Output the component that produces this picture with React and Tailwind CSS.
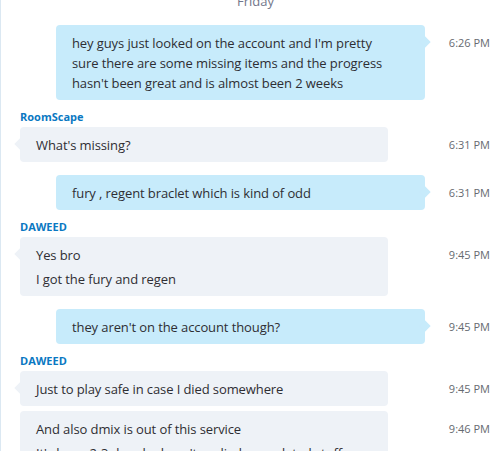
const font = { fontFamily: '"Open Sans", "Noto Sans", sans-serif' };

function Time({ children }) {
    return (
        <div className="flex-1 pt-[8px] pr-[1px] text-right text-[11px] leading-[20px] text-[#666a70]">
            {children}
        </div>
    );
}

function Sent({ lines, time }) {
    return (
        <div className="flex pl-[55px]">
            <div className="relative w-[369px] rounded-[4px] bg-[#c7ebfb] pt-[8px] pb-[7px] pl-[16px] pr-[12px]">
                {lines.map((l) => (
                    <div key={l} className="text-[13px] leading-[20px] tracking-[-0.1px] text-[#2e2e33]">{l}</div>
                ))}
                <span className="absolute right-[-4px] top-[13px] h-[8px] w-[8px] rotate-45 bg-[#c7ebfb]" />
            </div>
            <Time>{time}</Time>
        </div>
    );
}

function Received({ lines, time, arrow = false, gap = false }) {
    return (
        <div className="flex pl-[19px]">
            <div className={`relative flex w-[368px] flex-col rounded-[4px] bg-[#eef2f7] pt-[8px] pb-[7px] pl-[16px] pr-[12px] ${gap ? 'gap-[4px]' : ''}`}>
                {lines.map((l) => (
                    <div key={l} className="whitespace-nowrap text-[13px] leading-[20px] tracking-[-0.1px] text-[#2e2e33]">{l}</div>
                ))}
                {arrow && (
                    <span className="absolute left-[-4px] top-[13px] h-[8px] w-[8px] rotate-45 bg-[#eef2f7]" />
                )}
            </div>
            <Time>{time}</Time>
        </div>
    );
}

function Name({ children }) {
    return (
        <div className="mt-[10px] mb-[3px] pl-[19px] text-[11px] font-bold leading-[14px] text-[#0a78c2]">
            {children}
        </div>
    );
}

export default function App() {
    return (
        <div className="h-[451px] w-[491px] overflow-hidden border-l border-[#dbe8f2] bg-white" style={font}>
            {/* date divider */}
            <div className="-mt-[9px] flex items-center">
                <div className="mt-[-7px] h-px w-[218px] bg-[#dde5ec]" />
                <div className="w-[73px] text-center text-[13px] leading-[20px] text-[#72768a]">Friday</div>
                <div className="mt-[-7px] h-px flex-1 bg-[#dde5ec]" />
            </div>

            <div className="mt-[14px]">
                <Sent
                    lines={[
                        "hey guys just looked on the account and I'm pretty",
                        'sure there are some missing items and the progress',
                        "hasn't been great and is almost been 2 weeks",
                    ]}
                    time="6:26 PM"
                />
            </div>

            <Name>RoomScape</Name>
            <Received lines={["What's missing?"]} time="6:31 PM" arrow />

            <div className="mt-[13px]">
                <Sent lines={['fury , regent braclet which is kind of odd']} time="6:31 PM" />
            </div>

            <Name>DAWEED</Name>
            <Received lines={['Yes bro', 'I got the fury and regen']} time="9:45 PM" arrow gap />

            <div className="mt-[13px]">
                <Sent lines={["they aren't on the account though?"]} time="9:45 PM" />
            </div>

            <Name>DAWEED</Name>
            <Received lines={['Just to play safe in case I died somewhere']} time="9:45 PM" arrow />
            <div className="mt-[5px]">
                <Received
                    lines={['And also dmix is out of this service', "It's been 2-3 days he hasn't replied or updated stuff"]}
                    time="9:46 PM"
                    gap
                />
            </div>
        </div>
    );
}
